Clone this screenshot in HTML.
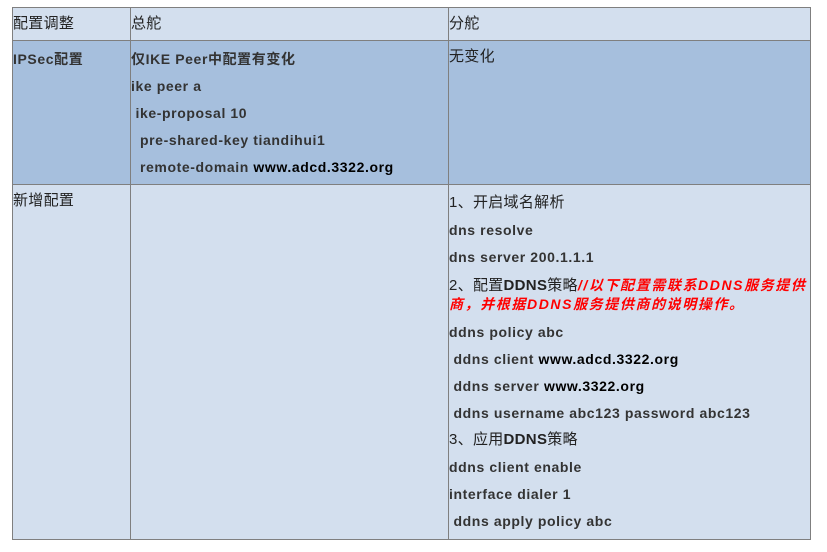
<!DOCTYPE html>
<html><head><meta charset="utf-8"><style>
body{margin:0;width:827px;height:552px;background:#fff;position:relative;overflow:hidden;font-family:"Liberation Sans","Noto Sans CJK SC",sans-serif;font-size:14px;font-weight:bold;color:#333;letter-spacing:0.6px}
.r{position:absolute;left:12px;width:799px;box-sizing:border-box;border:1px solid #7f7f7f}
.v{position:absolute;top:7px;height:532px;width:1px;background:#7f7f7f}
.t{position:absolute;white-space:pre;line-height:18px}
.k{color:#000}
.red{color:#f00;font-style:italic;letter-spacing:1.6px}
.cj{font-size:15px;font-weight:normal;color:#222;letter-spacing:0.3px}
</style></head><body>
<div class="r" style="top:7px;height:34px;background:#d3dfee"></div>
<div class="r" style="top:40px;height:145px;background:#a6bfdd"></div>
<div class="r" style="top:184px;height:356px;background:#d3dfee"></div>
<div class="v" style="left:130px"></div>
<div class="v" style="left:448px"></div>

<div class="t cj" style="left:13px;top:15px">配置调整</div>
<div class="t cj" style="left:131px;top:15px">总舵</div>
<div class="t cj" style="left:449px;top:15px">分舵</div>

<div class="t" style="left:13px;top:50px">IPSec配置</div>
<div class="t" style="left:131px;top:50px">仅IKE Peer中配置有变化</div>
<div class="t" style="left:131px;top:77px">ike peer a</div>
<div class="t" style="left:131px;top:104px"> ike-proposal 10</div>
<div class="t" style="left:131px;top:131px">  pre-shared-key tiandihui1</div>
<div class="t" style="left:131px;top:158px">  remote-domain <span class="k">www.adcd.3322.org</span></div>
<div class="t cj" style="left:449px;top:48px">无变化</div>

<div class="t cj" style="left:13px;top:192px">新增配置</div>
<div class="t cj" style="left:449px;top:194px">1、开启域名解析</div>
<div class="t" style="left:449px;top:221px">dns resolve</div>
<div class="t" style="left:449px;top:248px">dns server 200.1.1.1</div>
<div class="t cj" style="left:449px;top:276px">2、配置<b>DDNS</b>策略<span class="red" style="font-weight:bold;font-size:14px">//以下配置需联系DDNS服务提供</span></div>
<div class="t red" style="left:449px;top:295px">商，并根据DDNS服务提供商的说明操作。</div>
<div class="t" style="left:449px;top:323px">ddns policy abc</div>
<div class="t" style="left:449px;top:350px"> ddns client <span class="k">www.adcd.3322.org</span></div>
<div class="t" style="left:449px;top:377px"> ddns server <span class="k">www.3322.org</span></div>
<div class="t" style="left:449px;top:404px"> ddns username abc123 password abc123</div>
<div class="t cj" style="left:449px;top:431px">3、应用<b>DDNS</b>策略</div>
<div class="t" style="left:449px;top:458px">ddns client enable</div>
<div class="t" style="left:449px;top:485px">interface dialer 1</div>
<div class="t" style="left:449px;top:512px"> ddns apply policy abc</div>
</body></html>
